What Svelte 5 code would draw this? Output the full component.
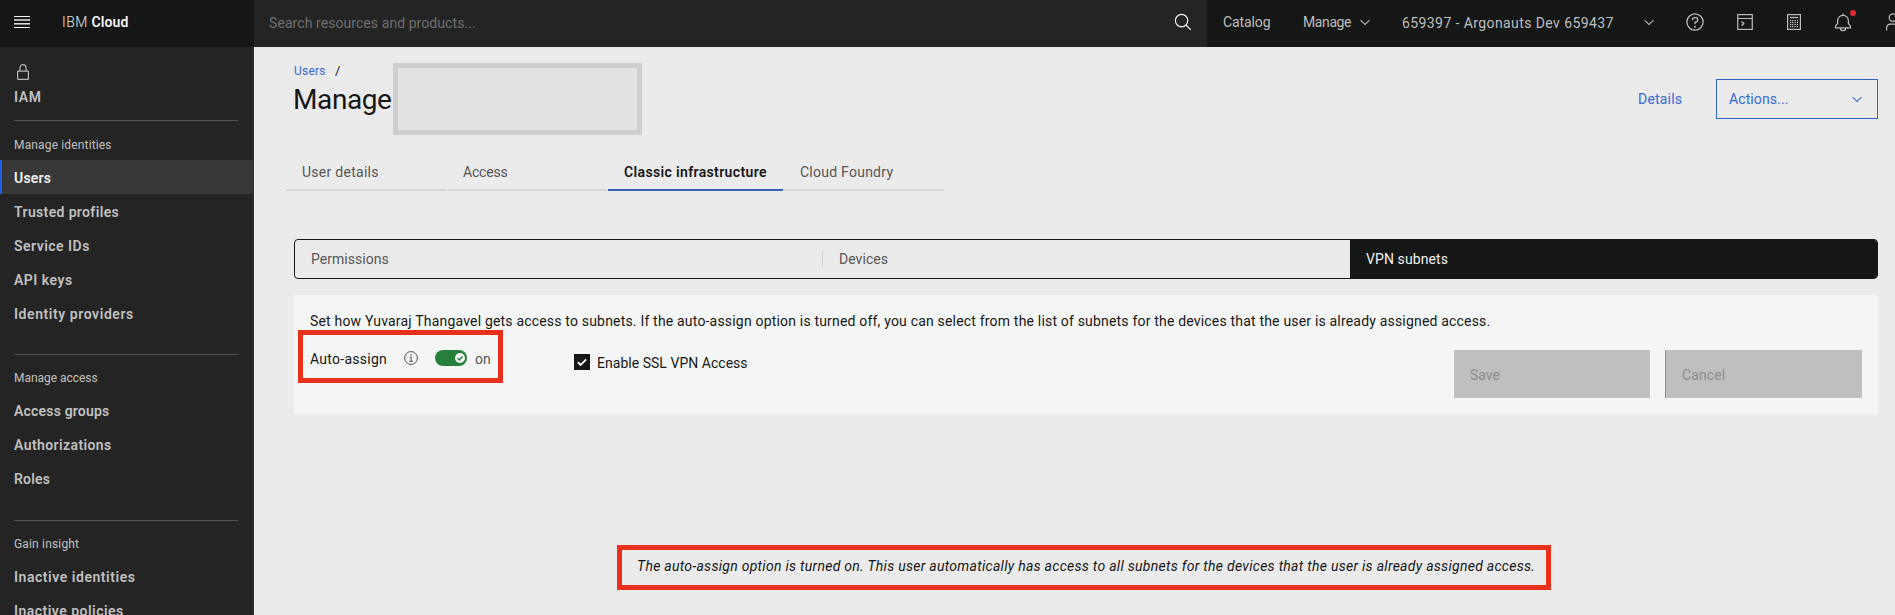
<script>
  const groups = [
    {
      title: 'Manage identities', ls: 0.15,
      items: [
        { label: 'Users', ls: 0.21, active: true },
        { label: 'Trusted profiles', ls: 0.357 },
        { label: 'Service IDs', ls: 0.48 },
        { label: 'API keys', ls: 0.5 },
        { label: 'Identity providers', ls: 0.57 }
      ]
    },
    {
      title: 'Manage access', ls: -0.04,
      items: [
        { label: 'Access groups', ls: 0.19 },
        { label: 'Authorizations', ls: 0.4 },
        { label: 'Roles', ls: 0.204 }
      ]
    },
    {
      title: 'Gain insight', ls: 0.168,
      items: [
        { label: 'Inactive identities', ls: 0.54 },
        { label: 'Inactive policies', ls: 0.47 }
      ]
    }
  ];

  const tabs = [
    { label: 'User details', ls: 0.27 },
    { label: 'Access', ls: -0.2 },
    { label: 'Classic infrastructure', ls: 0.36, active: true },
    { label: 'Cloud Foundry', ls: 0.25 }
  ];
</script>

{#snippet chevron(size)}
  <svg width={size} height={size} viewBox="0 0 32 32" fill="currentColor" aria-hidden="true">
    <path d="M16 23.4 5 12.4 6.6 10.8 16 20.2 25.4 10.8 27 12.4z" />
  </svg>
{/snippet}

<div class="page">
  <header>
    <div class="brand">
      <svg class="menu" width="16" height="12" viewBox="0 0 16 12" fill="#f4f4f4" aria-hidden="true">
        <rect width="16" height="1" /><rect y="3.3" width="16" height="1.4" />
        <rect y="7.1" width="16" height="1.4" /><rect y="11" width="16" height="1" />
      </svg>
      <span class="name"><span class="ibm">IBM</span> <b>Cloud</b></span>
    </div>
    <div class="search">
      <span>Search resources and products...</span>
      <svg width="18" height="18" viewBox="0 0 18 18" fill="none" stroke="#f4f4f4" stroke-width="1.200" aria-hidden="true">
        <circle cx="7.600" cy="7.600" r="6.200" /><path d="m12 12 4.800 4.800" />
      </svg>
    </div>
    <nav class="tools">
      <span class="catalog">Catalog</span>
      <span class="manage">Manage</span>
      <span class="mchev">{@render chevron(14)}</span>
      <span class="account">659397 - Argonauts Dev 659437</span>
      <span class="achev">{@render chevron(14)}</span>
      <svg class="i-help" width="20" height="20" viewBox="0 0 32 32" fill="currentColor" aria-hidden="true">
        <path d="M16 2a14 14 0 1 0 14 14A14 14 0 0 0 16 2zm0 26a12 12 0 1 1 12-12 12 12 0 0 1-12 12z" />
        <circle cx="16" cy="23.5" r="1.5" />
        <path d="M17 8h-1.500A4.490 4.490 0 0 0 11 12.490V13h2v-.5A2.500 2.500 0 0 1 15.500 10H17a2.500 2.500 0 0 1 0 5h-2v4.500h2V17a4.500 4.500 0 0 0 0-9z" />
      </svg>
      <svg class="i-shell" width="16" height="16" viewBox="0 0 16 16" fill="none" stroke="currentColor" aria-hidden="true">
        <rect x=".75" y=".6" width="14.5" height="14.8" stroke-width="1.2" />
        <path d="M1 4.500h14" /><path d="m4.500 7.500 2.300 2.100-2.300 2.100" stroke-width="1.300" />
      </svg>
      <svg class="i-calc" width="14" height="16" viewBox="0 0 14 16" aria-hidden="true">
        <rect x=".6" y=".6" width="12.8" height="14.8" fill="none" stroke="currentColor" stroke-width="1.2" />
        <path d="M3 3.500h8" stroke="currentColor" stroke-width="1.300" />
        <g fill="currentColor">
          {#each [6, 8, 10, 12] as y}{#each [3, 5, 7.500, 9.800] as x}<rect {x} {y} width="1.300" height="1.200" />{/each}{/each}
        </g>
      </svg>
      <span class="bell">
        <svg width="18" height="19" viewBox="0 0 18 19" fill="none" stroke="currentColor" stroke-width="1.200" aria-hidden="true">
          <path d="M9 .5v1.800M3.600 10.500V7.700a5.400 5.400 0 0 1 10.800 0v2.800l2.100 2.600v1.800h-15v-1.800zM6.300 15a2.700 2.700 0 0 0 5.400 0" />
        </svg>
        <i></i>
      </span>
      <svg class="i-user" width="18" height="18" viewBox="0 0 18 18" fill="none" stroke="currentColor" stroke-width="1.200" aria-hidden="true">
        <circle cx="8" cy="4.600" r="3.800" /><path d="M1.600 17.500v-2.700a3.600 3.600 0 0 1 3.600-3.600h5.600a3.600 3.600 0 0 1 3.600 3.600v2.700" />
      </svg>
    </nav>
  </header>

  <div class="body">
    <aside>
      <svg class="lock" width="12" height="16" viewBox="0 0 12 16" fill="none" stroke="#b5b5b5" stroke-width="1.200" aria-hidden="true">
        <rect x=".6" y="7.100" width="10.800" height="8.200" rx=".6" /><path d="M3 7V3.600a3 3 0 0 1 6 0V7" />
      </svg>
      <div class="iam">IAM</div>
      {#each groups as g}
        <section>
          <h2 style:letter-spacing="{g.ls}px">{g.title}</h2>
          {#each g.items as it}
            <div class="item" class:active={it.active} style:letter-spacing="{it.ls}px">{it.label}</div>
          {/each}
        </section>
      {/each}
    </aside>

    <main>
      <div class="crumbs"><span class="link">Users</span><span class="slash">/</span></div>
      <div class="titlebar">
        <h1>Manage</h1>
        <div class="redacted"></div>
        <span class="details">Details</span>
        <div class="actions"><span>Actions...</span>{@render chevron(14)}</div>
      </div>

      <div class="tabs">
        {#each tabs as t}
          <div class="tab" class:active={t.active} style:letter-spacing="{t.ls}px">{t.label}</div>
        {/each}
      </div>

      <div class="switcher">
        <div class="seg permissions">Permissions</div>
        <div class="seg devices">Devices</div>
        <div class="seg selected">VPN subnets</div>
      </div>

      <div class="panel">
        <p>Set how Yuvaraj Thangavel gets access to subnets. If the auto-assign option is turned off, you can select from the list of subnets for the devices that the user is already assigned access.</p>
        <div class="controls">
          <div class="auto">
            <span class="auto-label">Auto-assign</span>
            <svg class="info" width="14" height="14" viewBox="0 0 14 14" fill="none" stroke="#3c3c3c" aria-hidden="true">
              <circle cx="7" cy="7" r="6.400" stroke-width=".9" />
              <path d="M5.700 6.200h1.500v4M5.200 10.300h3.700" stroke-width=".9" /><circle cx="7" cy="4" r=".75" fill="#3c3c3c" stroke="none" />
            </svg>
            <span class="toggle">
              <svg width="10" height="10" viewBox="0 0 10 10" aria-hidden="true">
                <circle cx="5" cy="5" r="5" fill="#f4f6f5" /><path d="m2.600 5.200 1.700 1.700 3.200-3.400" fill="none" stroke="#26803b" stroke-width="1.500" />
              </svg>
            </span>
            <span class="on">on</span>
          </div>
          <div class="ssl">
            <span class="check">
              <svg width="16" height="16" viewBox="0 0 16 16" fill="none" stroke="#fff" stroke-width="1.900" aria-hidden="true"><path d="m3.800 8.300 2.800 2.700 5.600-5.600" /></svg>
            </span>
            <span>Enable SSL VPN Access</span>
          </div>
          <div class="btn save">Save</div>
          <div class="btn cancel">Cancel</div>
        </div>
      </div>

      <div class="notice">The auto-assign option is turned on. This user automatically has access to all subnets for the devices that the user is already assigned access.</div>
    </main>
  </div>
</div>

<style>
  :global(body) { margin: 0; overflow: hidden; }
  .page {
    width: 1895px; height: 615px; overflow: hidden;
    display: flex; flex-direction: column;
    font: 400 14px/18px Roboto, "Noto Sans", sans-serif;
    color: #161616; background: #ebebeb; white-space: nowrap;
  }
  .page, .page * { box-sizing: border-box; }
  svg { display: block; flex: none; }

  header { display: flex; height: 47px; flex: none; background: #151716; color: #bebebe; }
  .brand { width: 254px; display: flex; padding: 0 0 0 14px; }
  .menu { margin-top: 16px; }
  .name { margin: 13px 0 0 32px; color: #e8e8e8; }
  .ibm { letter-spacing: .5px; font-weight: 300; }
  .name b { font-weight: 600; letter-spacing: .15px; color: #f4f4f4; }
  .search { width: 953px; background: #242424; display: flex; justify-content: space-between; padding: 14px 15px 0 15px; color: #6f6f6f; letter-spacing: .07px; }
  .search svg { margin-top: -1px; }
  .tools { flex: 1; display: flex; overflow: hidden; padding-left: 16px; }
  .tools span { margin-top: 13px; flex: none; }
  .tools .catalog { width: 80px; letter-spacing: -.1px; }
  .tools .manage { width: 55px; letter-spacing: -.39px; }
  .tools .mchev { width: 44px; margin-top: 15px; }
  .tools .account { width: 240px; margin-top: 14px; letter-spacing: .41px; }
  .tools .achev { width: 43px; margin-top: 15px; }
  .i-help { margin-top: 12px; }
  .i-shell { margin: 14px 0 0 32px; }
  .i-calc { margin: 14px 0 0 34px; }
  .tools .bell { position: relative; margin: 13px 0 0 33px; }
  .bell i { position: absolute; left: 16px; top: -3px; width: 6px; height: 6px; border-radius: 50%; background: #da2a2e; }
  .i-user { margin: 13px 0 0 33px; }

  .body { flex: 1; display: flex; min-height: 0; }
  aside { width: 254px; flex: none; background: #242424; color: #c0c0c0; overflow: hidden; border-right: 1px solid #333; }
  .lock { margin: 17px 0 0 17px; }
  .iam { margin: 8px 0 0 14px; font-weight: 600; letter-spacing: .63px; height: 18px; }
  section { margin-top: 25px; }
  .iam + section { margin-top: 14px; }
  section::before { content: ""; display: block; height: 1px; margin: 0 15px 0 14px; background: #525252; }
  h2 { margin: 0; padding: 14px 0 0 14px; height: 38px; font-weight: 400; font-size: 12px; }
  .iam + section h2 { padding-top: 15px; height: 39px; }
  .iam + section { margin-bottom: -1px; }
  .item { height: 34px; padding: 9px 0 0 14px; font-weight: 600; }
  .active.item { background: #383838; color: #f4f4f4; box-shadow: inset 2px 0 #1f5fe8; }

  main { flex: 1; min-width: 0; padding-left: 32px; display: flex; flex-direction: column; }
  .crumbs { display: flex; padding-left: 8px; margin-top: 15px; height: 17px; font-size: 12px; }
  .link { width: 41px; color: #3a6ad4; letter-spacing: .226px; }
  .slash { font-size: 13px; }
  .titlebar { display: flex; padding-left: 7px; height: 72px; margin-top: -16px; }
  h1 { margin: 19px 0 0; width: 100px; font-weight: 400; font-size: 28px; line-height: 36px; letter-spacing: -.4px; }
  .redacted { width: 249px; height: 72px; border: 5px solid #cecece; background: #e2e2e2; }
  .details { margin: 27px 0 0 auto; width: 78px; color: #3469d6; letter-spacing: .2px; }
  .actions { width: 162px; height: 40px; margin: 16px 17px 0 0; border: 1px solid #2e62c8; display: flex; justify-content: space-between; align-items: center; padding: 0 13px 0 12px; color: #3469d6; letter-spacing: .1px; }

  .tabs { display: flex; gap: 1px; height: 40px; margin-top: 16px; }
  .tab { width: 160px; height: 40px; padding: 12px 0 0 16px; border-bottom: 2px solid #d6d6d6; color: #565656; }
  .tab.active { width: 175px; border-color: #2f62b8; color: #161616; font-weight: 600; }

  .switcher { display: flex; width: 1584px; height: 40px; margin: 48px 0 0 8px; border: 1px solid #151716; border-radius: 4px; overflow: hidden; flex: none; }
  .seg { padding: 10px 0 0 16px; color: #565656; }
  .permissions { width: 528px; letter-spacing: .03px; position: relative; }
  .permissions::after { content: ""; position: absolute; right: 0; top: 11px; width: 1px; height: 16px; background: #d3d3d3; }
  .devices { width: 527px; letter-spacing: .05px; }
  .selected { flex: 1; background: #151716; color: #f0f0f0; letter-spacing: .1px; }

  .panel { width: 1584px; height: 119px; margin: 16px 0 0 8px; padding: 17px 16px 0; background: #f4f6f5; flex: none; }
  p { margin: 0; height: 18px; letter-spacing: .187px; }
  .controls { display: flex; }
  .auto { position: relative; z-index: 1; display: flex; width: 205px; height: 53px; margin-left: -12px; border: 5px solid #e8301a; padding-left: 7px; }
  .auto-label { width: 94px; margin-top: 15px; letter-spacing: .27px; }
  .info { margin-top: 16px; }
  .toggle { width: 32px; height: 16px; margin: 15px 0 0 17px; border-radius: 8px; background: #26803b; display: flex; justify-content: flex-end; padding: 3px 2px 0 0; }
  .on { margin: 15px 0 0 8px; color: #565656; }
  .ssl { display: flex; margin: 24px 0 0 71px; gap: 7px; height: 18px; letter-spacing: .03px; }
  .check { width: 16px; height: 16px; background: #161616; }
  .btn { height: 48px; margin-top: 20px; padding: 16px; background: #bfbfbf; color: #8d8d8d; }
  .save { width: 196px; margin-left: auto; }
  .cancel { width: 197px; margin-left: 15px; border-left: 1px solid #8d8d8d; letter-spacing: .1px; }

  .notice { width: 934px; height: 45px; margin: 131px 0 0 331px; border: 5px solid #e8301a; padding: 7px 0 0 15px; font-style: italic; letter-spacing: .281px; flex: none; }
</style>
